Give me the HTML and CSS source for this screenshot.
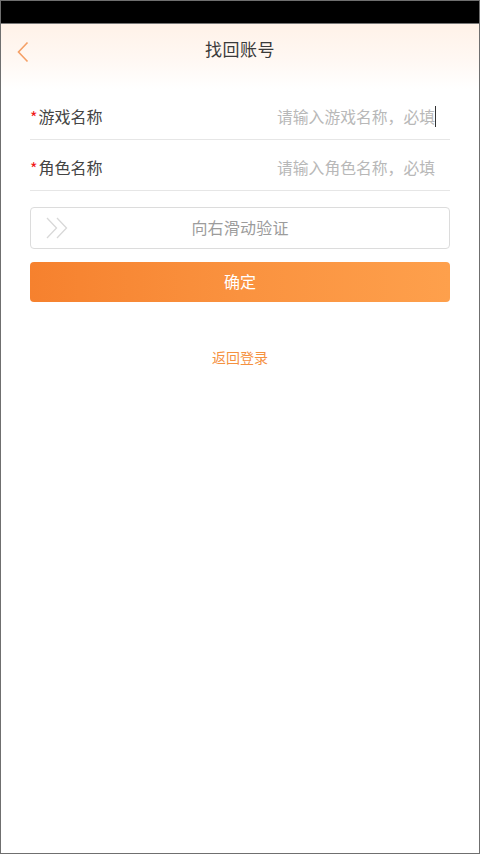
FILE: index.html
```html
<!DOCTYPE html>
<html lang="zh">
<head>
<meta charset="utf-8">
<link rel="stylesheet" href="styles.css">
</head>
<body>
<div class="frame">
  <div class="status"></div>
  <div class="top">
    <div class="nav">
      <svg class="back" width="14" height="22" viewBox="0 0 14 22"><path d="M11.5 1.5 L2.5 11 L11.5 20.5" fill="none" stroke="#f5a066" stroke-width="1.6"/></svg>
      <div class="title">找回账号</div>
    </div>
  </div>
  <div class="form">
    <div class="row">
      <div class="label"><span class="req">*</span>游戏名称</div>
      <div class="ph">请输入游戏名称，必填<span class="caret"></span></div>
    </div>
    <div class="row">
      <div class="label"><span class="req">*</span>角色名称</div>
      <div class="ph">请输入角色名称，必填</div>
    </div>
    <div class="slider">
      <svg class="arrows" width="24" height="22" viewBox="0 0 24 22"><path d="M1 1 L10.5 11 L1 21 M11 1 L20.5 11 L11 21" fill="none" stroke="#d8d8d8" stroke-width="1.3"/></svg>
      <div class="slide-text">向右滑动验证</div>
    </div>
    <div class="btn">确定</div>
    <div class="link">返回登录</div>
  </div>
</div>
</body>
</html>
```
FILE: styles.css
```css
* { box-sizing: border-box; }
html, body { margin: 0; padding: 0; background: #fff; }
body { font-family: "Noto Sans CJK SC", "Noto Sans", sans-serif; }
.frame {
  width: 480px;
  height: 854px;
  border: 1px solid #6f6f6f;
  background: #fff;
  overflow: hidden;
}
.status {
  height: 23px;
  background: #000;
  border-bottom: 1px solid #777;
}
.top {
  height: 65px;
  background: linear-gradient(to bottom, #fff2e8 0%, #fff8f3 55%, #ffffff 100%);
}
.nav {
  height: 50px;
  padding-bottom: 2px;
  display: flex;
  align-items: center;
  justify-content: center;
  position: relative;
}
.back {
  position: absolute;
  left: 15px;
  top: 17px;
}
.title {
  font-size: 17px;
  color: #3a3a3a;
  letter-spacing: 0.5px;
}
.form {
  padding: 0 29px;
}
.row {
  height: 51px;
  padding-top: 4px;
  border-bottom: 1px solid #e6e6e6;
  display: flex;
  align-items: center;
  justify-content: space-between;
}
.label {
  font-size: 16px;
  color: #444;
  display: flex;
  align-items: center;
}
.req {
  color: #f01818;
  font-size: 16px;
  margin-right: 1px;
  position: relative;
  top: 1px;
}
.ph {
  font-size: 15.8px;
  color: #b8b8b8;
  display: flex;
  align-items: center;
  padding-right: 15px;
  position: relative;
}
.caret {
  position: absolute;
  right: 14px;
  top: 1px;
  width: 1px;
  height: 21px;
  background: #333;
}
.slider {
  margin-top: 16px;
  height: 42px;
  padding-bottom: 3px;
  border: 1px solid #dcdcdc;
  border-radius: 4px;
  display: flex;
  align-items: center;
  justify-content: center;
  position: relative;
}
.arrows {
  position: absolute;
  left: 15px;
  top: 9px;
}
.slide-text {
  font-size: 16px;
  color: #9c9c9c;
  letter-spacing: 0.2px;
}
.btn {
  margin-top: 13px;
  height: 40px;
  padding-bottom: 3px;
  border-radius: 4px;
  background: linear-gradient(to right, #f6812e 0%, #fa923f 50%, #fea04c 100%);
  color: #fff;
  font-size: 16px;
  display: flex;
  align-items: center;
  justify-content: center;
}
.link {
  margin-top: 45px;
  text-align: center;
  font-size: 14px;
  line-height: 20px;
  color: #f5913f;
}
```
